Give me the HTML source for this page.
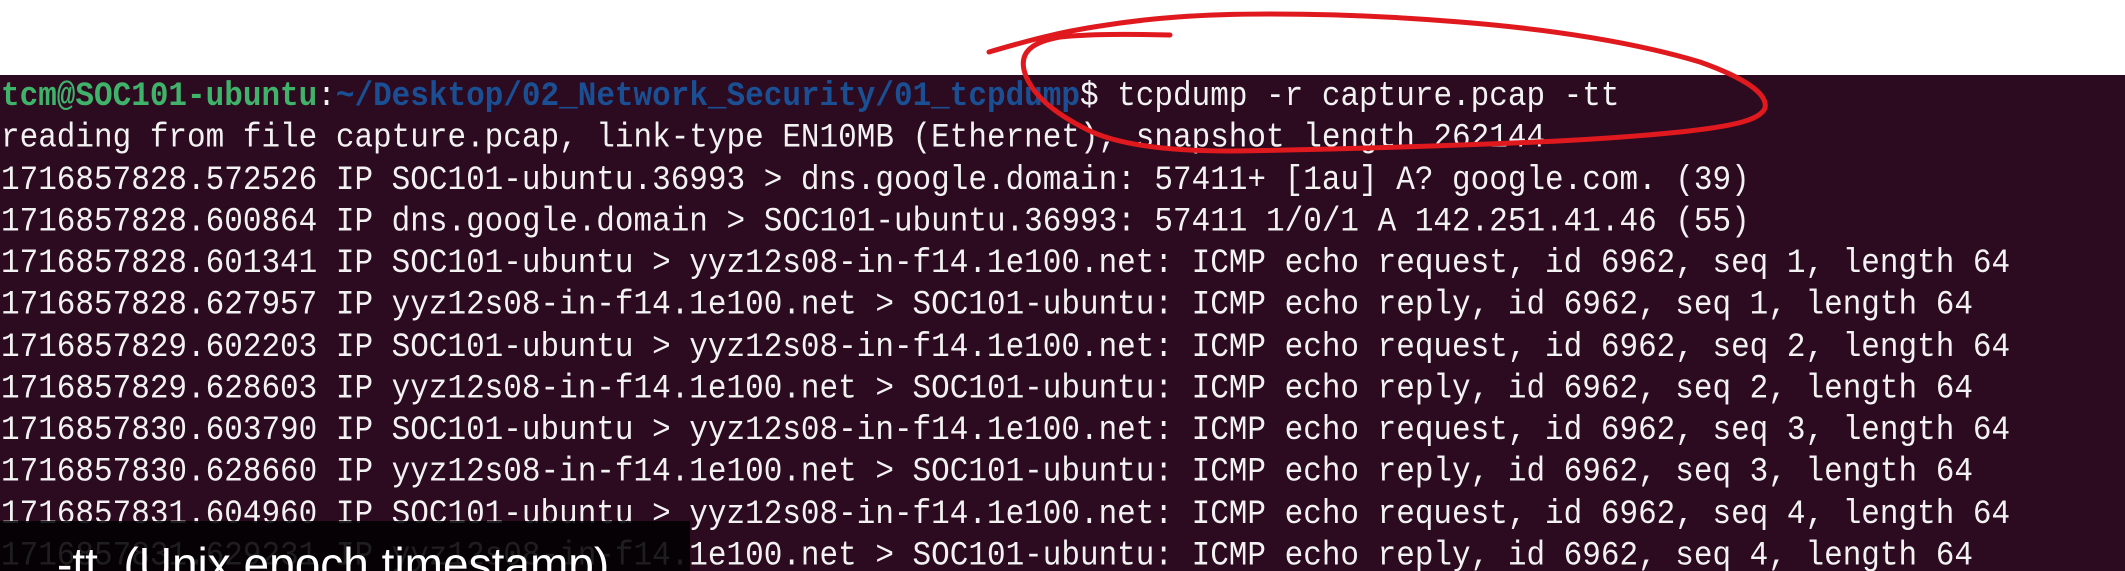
<!DOCTYPE html>
<html><head><meta charset="utf-8"><style>
html,body{margin:0;padding:0;width:2125px;height:571px;overflow:hidden;background:#fff;position:relative}
#term{position:absolute;left:0;top:75px;width:2125px;height:496px;background:#2c0a20}
#txt{position:absolute;left:1px;top:76px;font-family:"Liberation Mono",monospace;font-size:31px;line-height:37.25px;color:#f2f2f2;white-space:pre;transform:scaleY(1.12);transform-origin:0 0}
.g{color:#3fb36a;font-weight:bold}.b{color:#1a4f94;font-weight:bold}
#cap{position:absolute;left:0;top:521px;width:690px;height:50px;background:rgba(0,0,0,0.88);overflow:hidden}
#cap span{position:absolute;left:57px;top:16px;font-family:"Liberation Sans",sans-serif;font-size:46px;color:#fff;white-space:pre}
svg{position:absolute;left:0;top:0}
</style></head><body>
<div id="term"></div>
<div id="txt"><span class="g">tcm@SOC101-ubuntu</span>:<span class="b">~/Desktop/02_Network_Security/01_tcpdump</span>$ tcpdump -r capture.pcap -tt
reading from file capture.pcap, link-type EN10MB (Ethernet), snapshot length 262144
1716857828.572526 IP SOC101-ubuntu.36993 &gt; dns.google.domain: 57411+ [1au] A? google.com. (39)
1716857828.600864 IP dns.google.domain &gt; SOC101-ubuntu.36993: 57411 1/0/1 A 142.251.41.46 (55)
1716857828.601341 IP SOC101-ubuntu &gt; yyz12s08-in-f14.1e100.net: ICMP echo request, id 6962, seq 1, length 64
1716857828.627957 IP yyz12s08-in-f14.1e100.net &gt; SOC101-ubuntu: ICMP echo reply, id 6962, seq 1, length 64
1716857829.602203 IP SOC101-ubuntu &gt; yyz12s08-in-f14.1e100.net: ICMP echo request, id 6962, seq 2, length 64
1716857829.628603 IP yyz12s08-in-f14.1e100.net &gt; SOC101-ubuntu: ICMP echo reply, id 6962, seq 2, length 64
1716857830.603790 IP SOC101-ubuntu &gt; yyz12s08-in-f14.1e100.net: ICMP echo request, id 6962, seq 3, length 64
1716857830.628660 IP yyz12s08-in-f14.1e100.net &gt; SOC101-ubuntu: ICMP echo reply, id 6962, seq 3, length 64
1716857831.604960 IP SOC101-ubuntu &gt; yyz12s08-in-f14.1e100.net: ICMP echo request, id 6962, seq 4, length 64
1716857831.629231 IP yyz12s08-in-f14.1e100.net &gt; SOC101-ubuntu: ICMP echo reply, id 6962, seq 4, length 64</div>
<div id="cap"><span>-tt  (Unix epoch timestamp)</span></div>
<svg width="2125" height="571" viewBox="0 0 2125 571">
<path d="M989,52 C1030,40 1060,32 1100,26 C1150,18 1200,14 1270,14 C1340,14 1400,17 1460,22 C1560,30 1640,44 1700,62 C1745,78 1768,94 1765,108 C1760,120 1735,126 1680,132 C1600,140 1520,143 1460,145 C1380,148 1300,150 1230,151 C1170,151 1120,145 1090,131 C1055,114 1030,94 1024,70 C1020,52 1032,42 1060,37 C1090,34 1125,34 1170,35" fill="none" stroke="#e0191e" stroke-width="5" stroke-linecap="round"/>
</svg>
</body></html>
